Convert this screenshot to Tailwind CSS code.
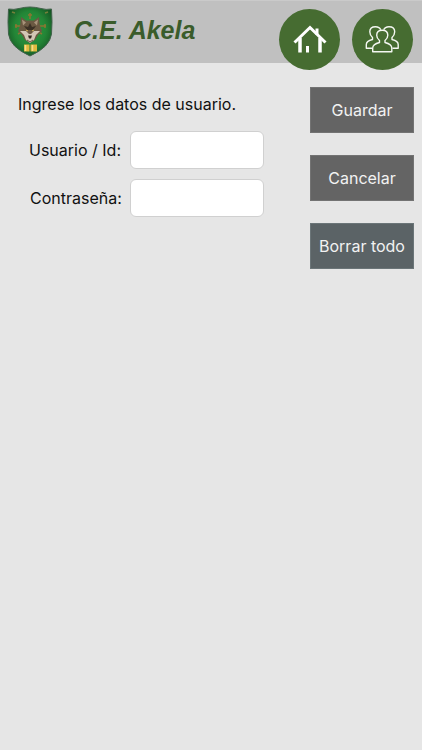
<!DOCTYPE html>
<html lang="es">
<head>
    <meta charset="UTF-8">
    <meta name="viewport" content="width=device-width, initial-scale=1.0">
    <title>C.E. Akela</title>
    <script src="https://cdn.jsdelivr.net/npm/@tailwindcss/browser@4"></script>
</head>
<body class="min-h-screen bg-[#e6e6e6] font-['Inter',sans-serif] text-base text-[#111111]">

    <!-- Header -->
    <header class="flex h-[63px] items-start border-t border-[#cacaca] bg-[#c0c0c0] pl-[7px] pr-[9px]">
        <!-- Wolf shield -->
        <svg class="mt-[5px] h-[51px] w-[46px] shrink-0" viewBox="0 0 46 51" role="img" aria-label="Escudo Akela">
            <defs>
                <radialGradient id="shield" cx="50%" cy="45%" r="60%">
                    <stop offset="0" stop-color="#2fa044" />
                    <stop offset="0.6" stop-color="#238536" />
                    <stop offset="1" stop-color="#145522" />
                </radialGradient>
            </defs>
            <path d="M1.5 3Q7 4 12 2.500Q18 1 23 1Q28 1 34 2.500Q39 4 44.500 3Q45.500 16 44.500 28Q43 41 23 50Q3 41 1.500 28Q.5 16 1.500 3Z" fill="url(#shield)" stroke="#41614a" />
            <path d="M5 6l3 1M38 7l3-1" stroke="#73803a" stroke-width="1.500" />
            <path d="M23 7v6M21 9h4M8 20h9M29 20h10M9 18v4M38 18v4M11 28l5-3M35 28l-5-3" stroke="#8a7632" stroke-width="1.500" />
            <path d="M14 11l5 3.500h8l5-3.500 1 9 2 5-4 4-3 5-5 3-5-3-3-5-4-4 2-5Z" fill="#6b5942" />
            <path d="M15 13.500l4 3-3 3ZM31 13.500l-4 3 3 3Z" fill="#a8937a" />
            <path d="M17 20l4 1 2-4 2 4 4-1-3 4h-6Z" fill="#3b3024" />
            <path d="M13 25l6 0 3 3h2l3-3h6l-4 4-2 5-4 3-4-3-2-5Z" fill="#d2c6b5" />
            <path d="M19 24l2 1M27 24l-2 1" stroke="#d9b860" />
            <path d="M21 29.500h4l-1 3h-2Z" fill="#332a22" />
            <path d="M20 34l3 2 3-2" fill="none" stroke="#6d5844" />
            <path d="M17 38.500h5.500v7h-5.500ZM23.500 38.500h6.500v7h-6.500Z" fill="#e0ba3f" />
            <path d="M18.500 39v6M25.500 39v6" stroke="#f3df8c" stroke-width="1.500" />
        </svg>
        <h1 class="ml-[21px] mt-[13px] flex-1 whitespace-nowrap font-['Liberation_Sans',Arial,sans-serif] text-[25px] leading-8 font-bold italic text-[#3a5c2b]">C.E. Akela</h1>

        <nav class="mt-2 flex gap-3">
            <a href="#" aria-label="Inicio" class="size-[61px] rounded-full bg-[#466c31]">
                <svg class="size-full" viewBox="0 0 61 61" fill="none" stroke="#ffffff">
                    <path d="M15.500 33.500L31 18.500L46.500 33.500" stroke-width="3" />
                    <path d="M21 29V43.500M41 29V43.500" stroke-width="3.500" />
                    <path d="M28.500 37V43.500" stroke-width="3" />
                    <path d="M38 19.500V26" stroke-width="3" />
                </svg>
            </a>
            <a href="#" aria-label="Usuarios" class="size-[61px] rounded-full bg-[#466c31]">
                <svg class="size-full" viewBox="0 0 61 61" fill="none" stroke="#f4f7f2" stroke-width="1.400" stroke-linejoin="round">
                    <path d="M20 39.300H14.300V35.500C14.300 32.500 16.500 31.500 20.500 30.500V28.500C18.300 26.500 17.800 24.500 17.800 22.800C17.800 19.500 20.300 17.700 23.500 17.700C26 17.700 28 18.800 28.800 20.800" />
                    <path d="M40.500 39.300H46.200V35.500C46.200 32.500 44 31.500 40 30.500V28.500C42.200 26.500 42.700 24.500 42.700 22.800C42.700 19.500 40.200 17.700 37 17.700C34.500 17.700 32.500 18.800 31.700 20.800" />
                    <path d="M27.500 31.500V33.500C23.500 34.500 20.700 35.500 20.700 39V42.700H39.800V39C39.800 35.500 37 34.500 33 33.500V31.500C35 30 35.800 28 35.800 26.300C35.800 23.100 33.500 21.200 30.250 21.200C27 21.200 24.700 23.100 24.700 26.300C24.700 28 25.500 30 27.500 31.500Z" />
                </svg>
            </a>
        </nav>
    </header>

    <!-- User form -->
    <form class="flex items-start justify-between pl-[18px] pr-2 pt-6">
        <div class="pt-[5px]">
            <p class="whitespace-nowrap">Ingrese los datos de usuario.</p>
            <div class="mt-[15px] grid grid-cols-[106px_134px] items-center gap-x-[6px] gap-y-[10px]">
                <label for="usuario" class="whitespace-nowrap pl-[11px]">Usuario / Id:</label>
                <input id="usuario" type="text" class="h-[38px] w-full rounded-md border border-[#d0d0d0] bg-white px-2 outline-none">
                <label for="contrasena" class="whitespace-nowrap pl-3">Contraseña:</label>
                <input id="contrasena" type="password" class="h-[38px] w-full rounded-md border border-[#d0d0d0] bg-white px-2 outline-none">
            </div>
        </div>

        <div class="flex w-[104px] flex-col gap-[22px] text-[#f2f2f2]">
            <button type="submit" class="h-[46px] whitespace-nowrap border border-[#737373] bg-[#646464]">Guardar</button>
            <button type="button" class="h-[46px] whitespace-nowrap border border-[#737373] bg-[#646464]">Cancelar</button>
            <button type="reset" class="h-[46px] whitespace-nowrap border border-[#6b7578] bg-[#5b6366]">Borrar todo</button>
        </div>
    </form>

</body>
</html>
